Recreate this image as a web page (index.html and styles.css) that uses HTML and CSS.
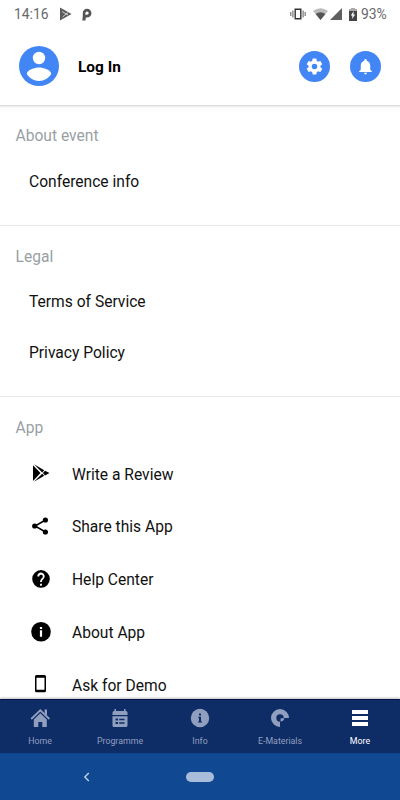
FILE: index.html
```html
<!DOCTYPE html>
<html lang="en">
<head>
<meta charset="utf-8">
<title>More</title>
<link rel="stylesheet" href="styles.css">
</head>
<body>
<div class="screen">
  <div class="status">
    <span class="time">14:16</span>
    <svg class="st-play" width="12" height="14" viewBox="0 0 12 14"><path fill="#5c5c5c" d="M0 .5 11.5 7 0 13.500z"/><path d="M2 4.500 8 8M2.500 10 8 5.500" stroke="#ddd" stroke-width=".9"/></svg>
    <svg class="st-p" width="10" height="13" viewBox="0 0 10 13"><path fill="#555" fill-rule="evenodd" d="M5 .7a4.400 4.400 0 0 1 0 8.900H3.900L3.400 12.500H.3L.8 8V4.900A4.200 4.200 0 0 1 5 .7zM5 3.400a1.600 1.600 0 0 0-1.600 1.600v1.800H5a1.700 1.700 0 0 0 0-3.400z"/></svg>
    <span class="grow"></span>
    <svg width="16" height="12" viewBox="0 0 16 12"><path fill="none" stroke="#333" stroke-width="1.400" d="M5.200 1.200h5.600v9.600H5.200z"/><path stroke="#777" stroke-width="1.200" d="M.8 4v4M2.900 2.500v7M13.100 2.500v7M15.200 4v4"/></svg>
    <svg class="st-wifi" width="15" height="12" viewBox="0 0 15 12"><path fill="#bbb" d="M0 3Q7.500-2.500 15 3L7.500 12z"/><path fill="#555" d="M2.600 6Q7.500 2.600 12.400 6L7.500 12z"/></svg>
    <svg class="st-cell" width="12" height="12" viewBox="0 0 12 12"><path fill="#606060" d="M12 0v12H0z"/></svg>
    <svg class="st-bat" width="8" height="13" viewBox="0 0 8 13"><path fill="#aaa" d="M2 0h4v1h2v3H0V1h2z"/><path fill="#444" d="M0 3h8v10H0z"/><path fill="#fff" d="M4.700 3 1.800 7.500h1.700L3 11l3.200-4.600H4.400z"/></svg>
    <span class="pct">93%</span>
  </div>
  <header class="header">
    <svg class="avatar" width="40" height="40" viewBox="0 0 40 40"><circle cx="20" cy="20" r="20" fill="#4285f4"/><circle cx="20" cy="12" r="6.200" fill="#fff"/><path fill="#fff" d="M7.800 28c0-4 8.100-6.400 12.200-6.400S32.200 24 32.200 28c-2.500 4-7 7-12.200 7S10.300 32 7.800 28z"/></svg>
    <span class="login">Log In</span>
    <span class="grow"></span>
    <span class="round"><svg width="19" height="19" viewBox="0 0 24 24"><path fill="#fff" d="M19.430 12.980c.04-.32.070-.64.070-.98s-.03-.66-.07-.98l2.110-1.650c.19-.15.24-.42.120-.64l-2-3.460c-.12-.22-.39-.3-.61-.22l-2.490 1c-.52-.4-1.080-.73-1.690-.98l-.38-2.650A.488.488 0 0 0 14 2h-4c-.25 0-.46.180-.49.420l-.38 2.650c-.61.250-1.170.590-1.690.980l-2.490-1c-.23-.09-.49 0-.61.220l-2 3.460c-.13.220-.07.490.120.640l2.110 1.650c-.04.320-.07.650-.07.980s.03.660.070.980l-2.110 1.650c-.19.150-.24.420-.12.640l2 3.460c.12.220.39.300.61.220l2.490-1c.52.400 1.080.730 1.690.980l.38 2.650c.03.240.24.420.49.420h4c.25 0 .46-.18.490-.42l.38-2.650c.61-.25 1.170-.59 1.690-.98l2.490 1c.23.090.49 0 .61-.22l2-3.460c.12-.22.070-.49-.12-.64l-2.110-1.650zM12 15.500a3.500 3.500 0 1 1 0-7 3.500 3.500 0 0 1 0 7z"/></svg></span>
    <span class="round"><svg width="19" height="19" viewBox="0 0 24 24"><path fill="#fff" d="M12 22c1.100 0 2-.9 2-2h-4c0 1.100.9 2 2 2zm6-6v-5c0-3.070-1.640-5.640-4.500-6.320V4a1.500 1.500 0 0 0-3 0v.68C7.630 5.360 6 7.920 6 11v5l-2 2v1h16v-1l-2-2z"/></svg></span>
  </header>
  <main class="content">
    <section class="section">
      <h2>About event</h2>
      <div class="item">Conference info</div>
    </section>
    <section class="section legal">
      <h2>Legal</h2>
      <div class="item">Terms of Service</div>
      <div class="item">Privacy Policy</div>
    </section>
    <section class="section apps">
      <h2>App</h2>
      <div class="row"><svg width="22" height="22" viewBox="0 0 22 22"><path d="M3 3.200 10.500 11 3 19zM4 2.300 14.200 8.200 12.200 10.400zM4 19.700 12.200 11.800 14.200 13.800zM15 8.700 19.500 11 15 13.400 12.900 11z"/></svg><span>Write a Review</span></div>
      <div class="row"><svg width="22" height="22" viewBox="0 0 22 22"><path fill="none" stroke="#000" stroke-width="1.500" d="M15.500 5 5 11l10.500 6"/><circle cx="15.400" cy="5" r="2.600"/><circle cx="4.700" cy="11" r="2.600"/><circle cx="15.400" cy="17" r="2.600"/></svg><span>Share this App</span></div>
      <div class="row"><svg width="22" height="22" viewBox="0 0 24 24"><path d="M12 2.300a9.600 9.600 0 1 0 0 19.200 9.600 9.600 0 0 0 0-19.200zm1 17h-2v-2h2zm2.070-7.750-.9.920C13.450 13.200 13 13.800 13 15.300h-2v-.5c0-1.100.45-2.100 1.170-2.830l1.240-1.260A2 2 0 1 0 10 9.300H8a4 4 0 1 1 7.070 2.250z"/></svg><span>Help Center</span></div>
      <div class="row"><svg width="22" height="22" viewBox="0 0 22 22"><circle cx="11" cy="10.800" r="9.800"/><path fill="#fff" d="M9.900 6h2.200v2H9.900zM9.900 9.300h2.200v6.500H9.900z"/></svg><span>About App</span></div>
      <div class="row"><svg width="22" height="22" viewBox="0 0 22 22"><path fill-rule="evenodd" d="M6.500 2h8a1.500 1.500 0 0 1 1.500 1.500v14.300a1.500 1.500 0 0 1-1.500 1.500h-8A1.500 1.500 0 0 1 5 17.800V3.500A1.500 1.500 0 0 1 6.500 2zM6.500 4.700v12h8v-12z"/></svg><span>Ask for Demo</span></div>
    </section>
  </main>
  <nav class="tabs">
    <div class="tab"><svg width="20" height="20" viewBox="0 0 20 20"><path fill="none" stroke="currentColor" stroke-width="1.800" d="M1.200 11 10.300 2.300 19.400 11"/><path fill="currentColor" d="M14.600 1.500H17v6.300L14.600 5.500zM3.800 11.500 10.300 5.300l6.500 6.200V19h-4.500v-5H8.300v5H3.800z"/></svg><span>Home</span></div>
    <div class="tab"><svg width="20" height="20" viewBox="0 0 20 20"><path fill="currentColor" fill-rule="evenodd" d="M4.500 1H6v2h8V1h1.500v2h.5a1.500 1.500 0 0 1 1.500 1.500V7h-15V4.500A1.500 1.500 0 0 1 4 3h.5zM2.500 8.200h15v9.300A1.500 1.500 0 0 1 16 19H4a1.500 1.500 0 0 1-1.500-1.500zM5.500 10.500v2H8v-2zM9.200 10.800v1.400h5.300v-1.400zM5.500 14v2H8v-2zM9.200 14.300v1.400h5.300v-1.400z"/></svg><span>Programme</span></div>
    <div class="tab"><svg width="20" height="20" viewBox="0 0 20 20"><circle cx="10" cy="10" r="9.200" fill="currentColor"/><path class="cut" d="M9 5.500h2v2H9zM8.300 8.700H11v4.600h.9v1.200H8.200v-1.200H9V9.900h-.7z"/></svg><span>Info</span></div>
    <div class="tab"><svg width="20" height="20" viewBox="0 0 20 20"><path fill="currentColor" d="M10 19A9 9 0 1 1 19 10h-5.300A3.700 3.700 0 1 0 10 13.700zM10.600 10.300h3.700a4 4 0 0 1-1 2.200l-2.700 1.200z"/></svg><span>E-Materials</span></div>
    <div class="tab active"><svg width="20" height="20" viewBox="0 0 20 20"><path fill="currentColor" d="M2 2h16v4H2zM2 8h16v4H2zM2 14h16v4H2z"/></svg><span>More</span></div>
  </nav>
  <div class="sysnav">
    <svg width="8" height="10" viewBox="0 0 8 10"><path fill="none" stroke="#bfd0ea" stroke-width="1.400" d="M6.800 1 2.800 5l4 4"/></svg>
    <span class="pill"></span>
    <span></span>
  </div>
</div>
</body>
</html>
```
FILE: styles.css
```css
* { box-sizing: border-box; }
body { margin: 0; background: #fff; font-family: Roboto, "Liberation Sans", sans-serif; color: #111; }
svg { display: block; flex: none; }
.screen { width: 400px; height: 800px; display: flex; flex-direction: column; overflow: hidden; }
.grow { flex: 1; }
.status { height: 28px; flex: none; display: flex; align-items: center; padding: 0 13px 0 14px; font-size: 13.900px; color: #686868; }
.time { width: 46px; }
.st-p { margin-left: 10px; }
.st-wifi { margin-left: 7px; }
.st-cell { margin-left: 2px; }
.st-bat { margin-left: 7px; }
.pct { margin-left: 4px; width: 26px; white-space: nowrap; }
.header { height: 78px; flex: none; display: flex; align-items: center; padding: 0 19.500px 1px 19px; border-bottom: 1px solid #dcdcdc; box-shadow: 0 1px 2px #0000001a; }
.login { margin: 1px 0 0 19px; font-size: 15.400px; font-weight: 700; color: #000; }
.round { width: 31px; height: 31px; border-radius: 50%; background: #4285f4; display: flex; align-items: center; justify-content: center; }
.round + .round { margin-left: 19.500px; }
.content { flex: 1; min-height: 0; overflow: hidden; }
.section { padding: 20px 0 18px; border-bottom: 1px solid #e8e8e8; }
.section h2 { margin: 0 0 11px; padding-left: 15.500px; font-size: 15.600px; line-height: 20px; font-weight: 400; color: #989fa5; }
.item { height: 50px; padding-left: 29px; display: flex; align-items: center; font-size: 15.600px; color: #111; }
.legal, .apps { padding-top: 21px; }
.legal .item { height: 50.500px; }
.legal { padding-bottom: 18px; }
.legal h2 { margin-bottom: 10px; }
.apps h2 { margin-bottom: 9px; }
.row { height: 52.750px; padding-left: 30px; display: flex; align-items: center; gap: 20px; font-size: 15.600px; }
.row span { padding-top: 2.500px; }
.tabs { height: 54px; flex: none; display: flex; background: #0e2c66; border-top: 1px solid #061449; box-shadow: 0 -1px 2px #0004; color: #919fbf; position: relative; }
.tab { flex: 1; display: flex; flex-direction: column; align-items: center; padding-top: 8px; font-size: 8.800px; line-height: 12px; }
.tab span { margin-top: 7px; }
.active { color: #fff; }
.cut { fill: #0e2c66; }
.sysnav { height: 47px; flex: none; background: #104892; display: grid; grid-template-columns: 1fr 28px 1fr; align-items: center; }
.sysnav svg { margin-left: 82px; }
.pill { height: 10px; border-radius: 5px; background: #a9bddb; }
```
